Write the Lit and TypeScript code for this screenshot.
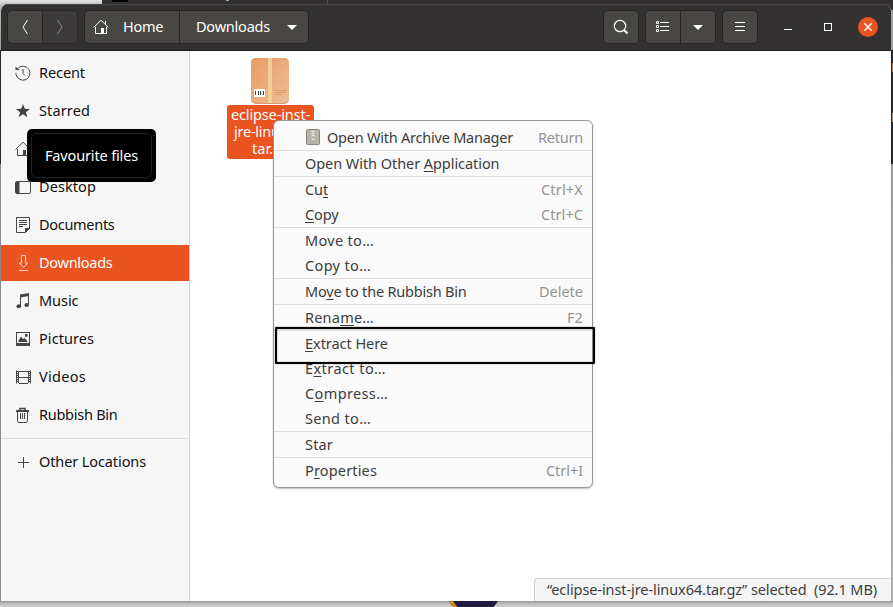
import { LitElement, html, css, svg, nothing } from "lit";
import { customElement, property } from "lit/decorators.js";
import { classMap } from "lit/directives/class-map.js";

/* One line of text whose tracking is adjusted so that it spans a set width. */
@customElement("fit-text")
class FitText extends LitElement {
  @property({ type: Number }) width = 0;
  @property() text = "";
  static styles = css`
    :host { display: inline-block; white-space: pre; transform: translateY(-1px); }
    u { text-decoration-thickness: 1px; text-underline-offset: 2px; text-decoration-skip-ink: none; }
  `;
  render() {
    const [before, key, after] = this.text.split("_");
    return html`<span>${before}${key ? html`<u>${key}</u>` : nothing}${after ?? ""}</span>`;
  }
  updated() {
    const span = this.renderRoot.querySelector("span") as HTMLElement;
    span.style.letterSpacing = "0px";
    const count = (span.textContent ?? "").length;
    const natural = span.getBoundingClientRect().width;
    if (count && this.width) span.style.letterSpacing = `${(this.width - natural) / count}px`;
  }
}

const icons: Record<string, unknown> = {
  recent: svg`<path d="M3.2 3.1A7 7 0 1 1 1.2 9.8" /><path d="M1.1 9.8A7 7 0 0 1 1 7" stroke-dasharray="1.5 1"/><path d="M8 4v4.5l2 2"/><path d="M.5 1.5V5H4.500z" fill="currentColor" stroke="none"/>`,
  star: svg`<path fill="currentColor" stroke="none" d="M8 1l1.8 4.800 5.200.2-4.100 3.200 1.500 5L8 11.300l-4.400 2.900 1.500-5L1 6l5.200-.2z"/>`,
  home: svg`<path d="M.6 8.500L8 1.200l7.400 7.300M2.500 8v6.500h11V8M12.500 2v3.500"/><path fill="currentColor" stroke="none" d="M8 9h3v5.500H8z"/>`,
  desktop: svg`<rect x=".5" y="2.500" width="15" height="12" rx="1.500"/><path fill="currentColor" stroke="none" d="M1 2.500h3.500v12H1z"/>`,
  documents: svg`<path d="M1.500 .500h13v11l-4 4h-9z"/><path d="M4 3.500h8M4 5.500h8M4 7.500h8M4 9.500h4"/><path fill="currentColor" stroke="none" d="M10 11h5l-5 5z"/>`,
  downloads: svg`<path d="M6.500 .500h4v7.500h2.200L8.500 12.500 4.300 8h2.200zM4 15.500h9"/>`,
  music: svg`<path fill="currentColor" stroke="none" d="M5 1.500l9-1.500v3L5 4.500z"/><path d="M5.500 3v10M13.500 2v9"/><ellipse cx="3.800" cy="13.300" rx="2.300" ry="2" fill="currentColor" stroke="none"/><ellipse cx="11.700" cy="12" rx="2.300" ry="2" fill="currentColor" stroke="none"/>`,
  pictures: svg`<rect x="1.500" y="1.500" width="13" height="12"/><path fill="currentColor" stroke="none" d="M1 12h14v3H1zM3.500 11V9.500L6 5.500l2 2.500 1.500-1.200L13 11zM10 3h2.500v2.700H10z"/>`,
  videos: svg`<path d="M1.500 1.500v13M15.500 1.500v13M3.500 2v12M13.500 2v12M4 2.500h9M4 8.500h9M4 14.500h9"/><path stroke-dasharray="1 1" d="M2.500 2v12M14.500 2v12" stroke-width="1"/>`,
  trash: svg`<path d="M1 4h13" stroke-width="2"/><path d="M5 3V1.500h5V3" stroke-width="1.500"/><path d="M2.500 4v9.500q0 2 1.500 2h7q1.500 0 1.500-2V4M5.500 6v6M7.500 6v6M9.500 6v6"/>`,
  plus: svg`<path d="M3 8.500h11M8.500 3v11"/>`,
  back: svg`<path d="M10.500 1L6 8l4.500 7"/>`,
  forward: svg`<path d="M5.500 1L10 8l-4.500 7"/>`,
  caret: svg`<path fill="currentColor" stroke="none" d="M3 6h10L8 11z"/>`,
  search: svg`<circle cx="7" cy="7" r="5.700" stroke-width="1.200"/><path d="M11.300 11.300l3.200 3.200" stroke-width="2"/>`,
  list: svg`<path d="M1.500 2.500h2v2h-2zM1.500 6.500h2v2h-2zM1.500 10.500h2v2h-2zM5 3.500h9M5 7.500h9M5 11.500h9"/>`,
  menu: svg`<path d="M3 3.500h10M3 7.500h10M3 11.500h10"/>`,
  minimize: svg`<path d="M4 10.500h8"/>`,
  maximize: svg`<rect x="4.500" y="4.500" width="7" height="7"/>`,
  close: svg`<path d="M4.300 4.300l7.400 7.400M11.700 4.300l-7.400 7.400" stroke-width="1.500"/>`,
  archive: svg`<rect x="1.500" y=".5" width="13" height="15" rx="1" fill="#b7b3a8" stroke="#88867c"/><path d="M8 1v10" stroke="#eeeeec" stroke-width="2.500"/><path d="M8 1v7" stroke="#8a887f" stroke-dasharray="1 1"/><path d="M7.500 8h1v2h-1z" fill="#8a887f" stroke="none"/>`,
};
const icon = (name: string) =>
  html`<svg class="icon" viewBox="0 0 16 16" width="16" height="16" fill="none" stroke="currentColor">${icons[name]}</svg>`;

type Place = { name: string; icon: string; width: number };
const places: Place[] = [
  { name: "Recent", icon: "recent", width: 46 },
  { name: "Starred", icon: "star", width: 51 },
  { name: "Home", icon: "home", width: 40 },
  { name: "Desktop", icon: "desktop", width: 57 },
  { name: "Documents", icon: "documents", width: 75.500 },
  { name: "Downloads", icon: "downloads", width: 73.500 },
  { name: "Music", icon: "music", width: 39.500 },
  { name: "Pictures", icon: "pictures", width: 55 },
  { name: "Videos", icon: "videos", width: 47 },
  { name: "Rubbish Bin", icon: "trash", width: 78.500 },
];

type Item = { label: string; width: number; accel?: string; accelWidth?: number; icon?: string };
const groups: Item[][] = [
  [{ label: "Open With Archive Manager", width: 186, accel: "Return", accelWidth: 45, icon: "archive" }],
  [{ label: "Open With Other _A_pplication", width: 194.500 }],
  [
    { label: "Cu_t_", width: 23, accel: "Ctrl+X", accelWidth: 42 },
    { label: "_C_opy", width: 33.500, accel: "Ctrl+C", accelWidth: 42 },
  ],
  [{ label: "Move to…", width: 69 }, { label: "Copy to…", width: 66 }],
  [{ label: "Mo_v_e to the Rubbish Bin", width: 161.500, accel: "Delete", accelWidth: 44 }],
  [{ label: "Rena_m_e…", width: 69, accel: "F2", accelWidth: 16 }],
  [
    { label: "_E_xtract Here", width: 83 },
    { label: "E_x_tract to…", width: 81 },
    { label: "C_o_mpress…", width: 83 },
    { label: "Send to…", width: 66 },
  ],
  [{ label: "Star", width: 28 }],
  [{ label: "P_r_operties", width: 72, accel: "Ctrl+I", accelWidth: 37 }],
];

@customElement("app-root")
class AppRoot extends LitElement {
  static styles = css`
    :host {
      display: block; position: relative; box-sizing: border-box; width: 893px; height: 607px; overflow: hidden;
      padding: 4px 2px 6px 1px; background: #c9c9c9;
      font: 14.5px/20px "Noto Sans", "Open Sans", sans-serif; color: #111;
    }
    * { box-sizing: border-box; }
    .icon { display: block; flex: none; }
    .behind { position: absolute; }
    .behind-light { left: 0; top: 0; width: 102px; height: 50px; background: linear-gradient(#e6e6e6, #bdbdbd 5px, #999); }
    .behind-dark { left: 102px; top: 0; right: 0; height: 10px; background: #302e2f; }
    .behind-tab { left: 112px; top: 0; width: 16px; height: 2px; background: #000; }
    .behind-mark { left: 226px; top: 0; width: 3px; height: 1px; background: #aaa; }
    .behind-tab2 { left: 327px; top: 0; width: 1px; height: 4px; background: #4b494a; }
    .behind-left { left: 0; top: 50px; width: 1px; height: 557px; background: linear-gradient(#29272a 114px, #888 114px); }
    .behind-right { right: 0; top: 50px; width: 2px; height: 551px; background: linear-gradient(#262529 114px, #999 114px, #b0b0b0); }
    .behind-edge { right: 0; top: 10px; width: 2px; height: 40px; background: #a0a0a0; }
    .behind-blip { right: 0; top: 63px; width: 1px; height: 9px; background: #b07a50; box-shadow: 0 50px #a89080; }
    .behind-bottom { left: 0; right: 0; top: 601px; height: 6px; background: linear-gradient(#8e8e8e, #b9b9b9 2px, #d0d0d0); overflow: hidden; }
    .ball { position: absolute; left: 445px; top: -43px; width: 57px; height: 57px; border-radius: 50%; background: #241b46; box-shadow: inset 4px 0 #d78a20; }

    .window { position: relative; display: flex; flex-direction: column; height: 597px; border-radius: 7px 7px 0 0; overflow: hidden; background: #fff; }
    .header { display: flex; flex: none; align-items: flex-start; height: 47px; padding: 5px 0 0 6px; color: #fff;
      background: #323031; border-top: 1px solid #484647; border-bottom: 1px solid #1d1b1c; }
    .group { display: flex; height: 34px; border: 1px solid #262425; border-radius: 5px; overflow: hidden; background: #484744; }
    .btn { display: flex; align-items: center; justify-content: center; width: 34px; }
    .btn + .btn { width: 35px; border-left: 1px solid #262425; }
    .btn.off { background: #3c3a3a; color: #8d8c8b; }
    .path { margin-left: 6px; width: 225px; }
    .btn.crumb { width: 94px; padding-left: 8px; justify-content: flex-start; gap: 14px; }
    .btn.current { width: 129px; padding-left: 16px; justify-content: flex-start; gap: 14px; }
    .tools { display: flex; gap: 6px; margin: 0 0 0 294px; }
    .caption { display: flex; margin-left: 22px; height: 34px; align-items: center; gap: 24px; }
    .close { display: flex; align-items: center; justify-content: center; width: 20px; height: 20px; margin-left: -2px; border-radius: 50%; background: #e95420; }

    .body { display: flex; flex: 1; min-height: 0; }
    .sidebar { flex: none; width: 189px; padding-top: 4px; background: #f6f6f6; border-right: 1px solid #d3d3d3; }
    .place { display: flex; align-items: center; gap: 8px; height: 36px; margin-bottom: 2px; padding: 0 0 1px 14px; }
    .place .icon { color: #454545; margin-top: 1px; }
    .place.on { background: #e95420; color: #fff; }
    .place.on .icon { color: #ffd9cb; }
    .rule { height: 1px; margin: 5px 0; background: #dadada; }

    .content { display: flex; flex: 1; flex-direction: column; justify-content: space-between; padding-top: 7px; }
    .file { display: flex; flex-direction: column; align-items: center; width: 87px; margin-left: 37px; }
    .box { margin-right: 2px; }
    .name { display: flex; flex-direction: column; align-items: center; width: 87px; height: 54px; margin-top: 1px;
      border-radius: 3px; background: #e95420; color: #fff; line-height: 17px; padding-top: 2px; }
    .status { align-self: flex-end; height: 23px; width: 357px; padding: 1px 0 0 12px; background: #f5f5f5; color: #3d3d3d;
      border: 1px solid #d0d0d0; border-width: 1px 0 0 1px; border-radius: 4px 0 0 0; }

    .menu { position: absolute; left: 273px; top: 120px; width: 320px; height: 368px; padding-top: 4px; color: #3d3d3d;
      background: #fafafa; border: 1px solid #989898; border-radius: 6px; box-shadow: 0 1px 2px rgba(0,0,0,.25); }
    .section + .section { border-top: 1px solid #dcdcdc; }
    .item { display: flex; align-items: center; height: 25px; padding: 1px 9px 0 31px; }
    .item .icon { margin: -2px 6px 0 0; }
    .accel { margin-left: auto; color: #949494; }
    .frame { position: absolute; left: 275px; top: 327px; width: 320px; height: 37px; border: 2px solid #000; border-radius: 1px; box-shadow: 0 0 1px #000, inset 0 0 1px #000; }
    .tooltip { position: absolute; left: 27px; top: 129px; width: 129px; height: 53px; padding: 4px; border-radius: 5px; background: #000; color: #fff; }
    .tooltip-inner { height: 45px; padding: 12px 0 0 13px; border: 1px solid #222; border-radius: 5px; }
  `;

  private place(p: Place) {
    return html`<div class=${classMap({ place: true, on: p.name === "Downloads" })}>
      ${icon(p.icon)}<fit-text .text=${p.name} .width=${p.width}></fit-text>
    </div>`;
  }

  private item(i: Item) {
    return html`<div class="item">
      ${i.icon ? icon(i.icon) : nothing}<fit-text .text=${i.label} .width=${i.width}></fit-text>
      ${i.accel ? html`<fit-text class="accel" .text=${i.accel} .width=${i.accelWidth ?? 0}></fit-text>` : nothing}
    </div>`;
  }

  render() {
    return html`
      <div class="behind behind-light"></div>
      <div class="behind behind-dark"></div>
      <div class="behind behind-tab"></div>
      <div class="behind behind-mark"></div>
      <div class="behind behind-tab2"></div>
      <div class="behind behind-left"></div>
      <div class="behind behind-right"></div>
      <div class="behind behind-edge"></div>
      <div class="behind behind-blip"></div>
      <div class="behind behind-bottom"><div class="ball"></div></div>

      <div class="window">
        <div class="header">
          <div class="group"><div class="btn">${icon("back")}</div><div class="btn off">${icon("forward")}</div></div>
          <div class="group path">
            <div class="btn crumb">${icon("home")}<fit-text .text=${"Home"} .width=${40}></fit-text></div>
            <div class="btn current"><fit-text .text=${"Downloads"} .width=${74}></fit-text>${icon("caret")}</div>
          </div>
          <div class="tools">
            <div class="group"><div class="btn">${icon("search")}</div></div>
            <div class="group"><div class="btn">${icon("list")}</div><div class="btn">${icon("caret")}</div></div>
            <div class="group"><div class="btn">${icon("menu")}</div></div>
          </div>
          <div class="caption">${icon("minimize")}${icon("maximize")}<div class="close">${icon("close")}</div></div>
        </div>
        <div class="body">
          <div class="sidebar">
            ${places.map((p) => this.place(p))}
            <div class="rule"></div>
            ${this.place({ name: "Other Locations", icon: "plus", width: 107 })}
          </div>
          <div class="content">
            <div class="file">
              <svg class="box" width="38" height="46" viewBox="0 0 38 46">
                <defs><linearGradient id="card" x2="1" y2="1"><stop stop-color="#e79b63" /><stop offset="1" stop-color="#efbd94" /></linearGradient></defs>
                <rect width="38" height="46" rx="5" fill="#cf9a70" />
                <rect width="38" height="45" rx="5" fill="url(#card)" />
                <path d="M17 0h4v45h-4z" fill="#f1cf98" />
                <path d="M3 31h11v8H3z" fill="#fff" />
                <path d="M4.500 33v4M7.500 33v4M9.500 33v4M12.500 33v4" stroke="#444" />
                <path d="M24 32.500h11M24 34.500h11M24 36.500h7" stroke="#df9868" />
              </svg>
              <div class="name">
                <fit-text .text=${"eclipse-inst-"} .width=${79}></fit-text>
                <fit-text .text=${"jre-linux64."} .width=${73}></fit-text>
                <fit-text .text=${"tar.gz"} .width=${37}></fit-text>
              </div>
            </div>
            <div class="status"><fit-text .text=${"“eclipse-inst-jre-linux64.tar.gz” selected  (92.1 MB)"} .width=${330}></fit-text></div>
          </div>
        </div>
      </div>

      <div class="menu">${groups.map((g) => html`<div class="section">${g.map((i) => this.item(i))}</div>`)}</div>
      <div class="frame"></div>
      <div class="tooltip"><div class="tooltip-inner"><fit-text .text=${"Favourite files"} .width=${93}></fit-text></div></div>
    `;
  }
}
